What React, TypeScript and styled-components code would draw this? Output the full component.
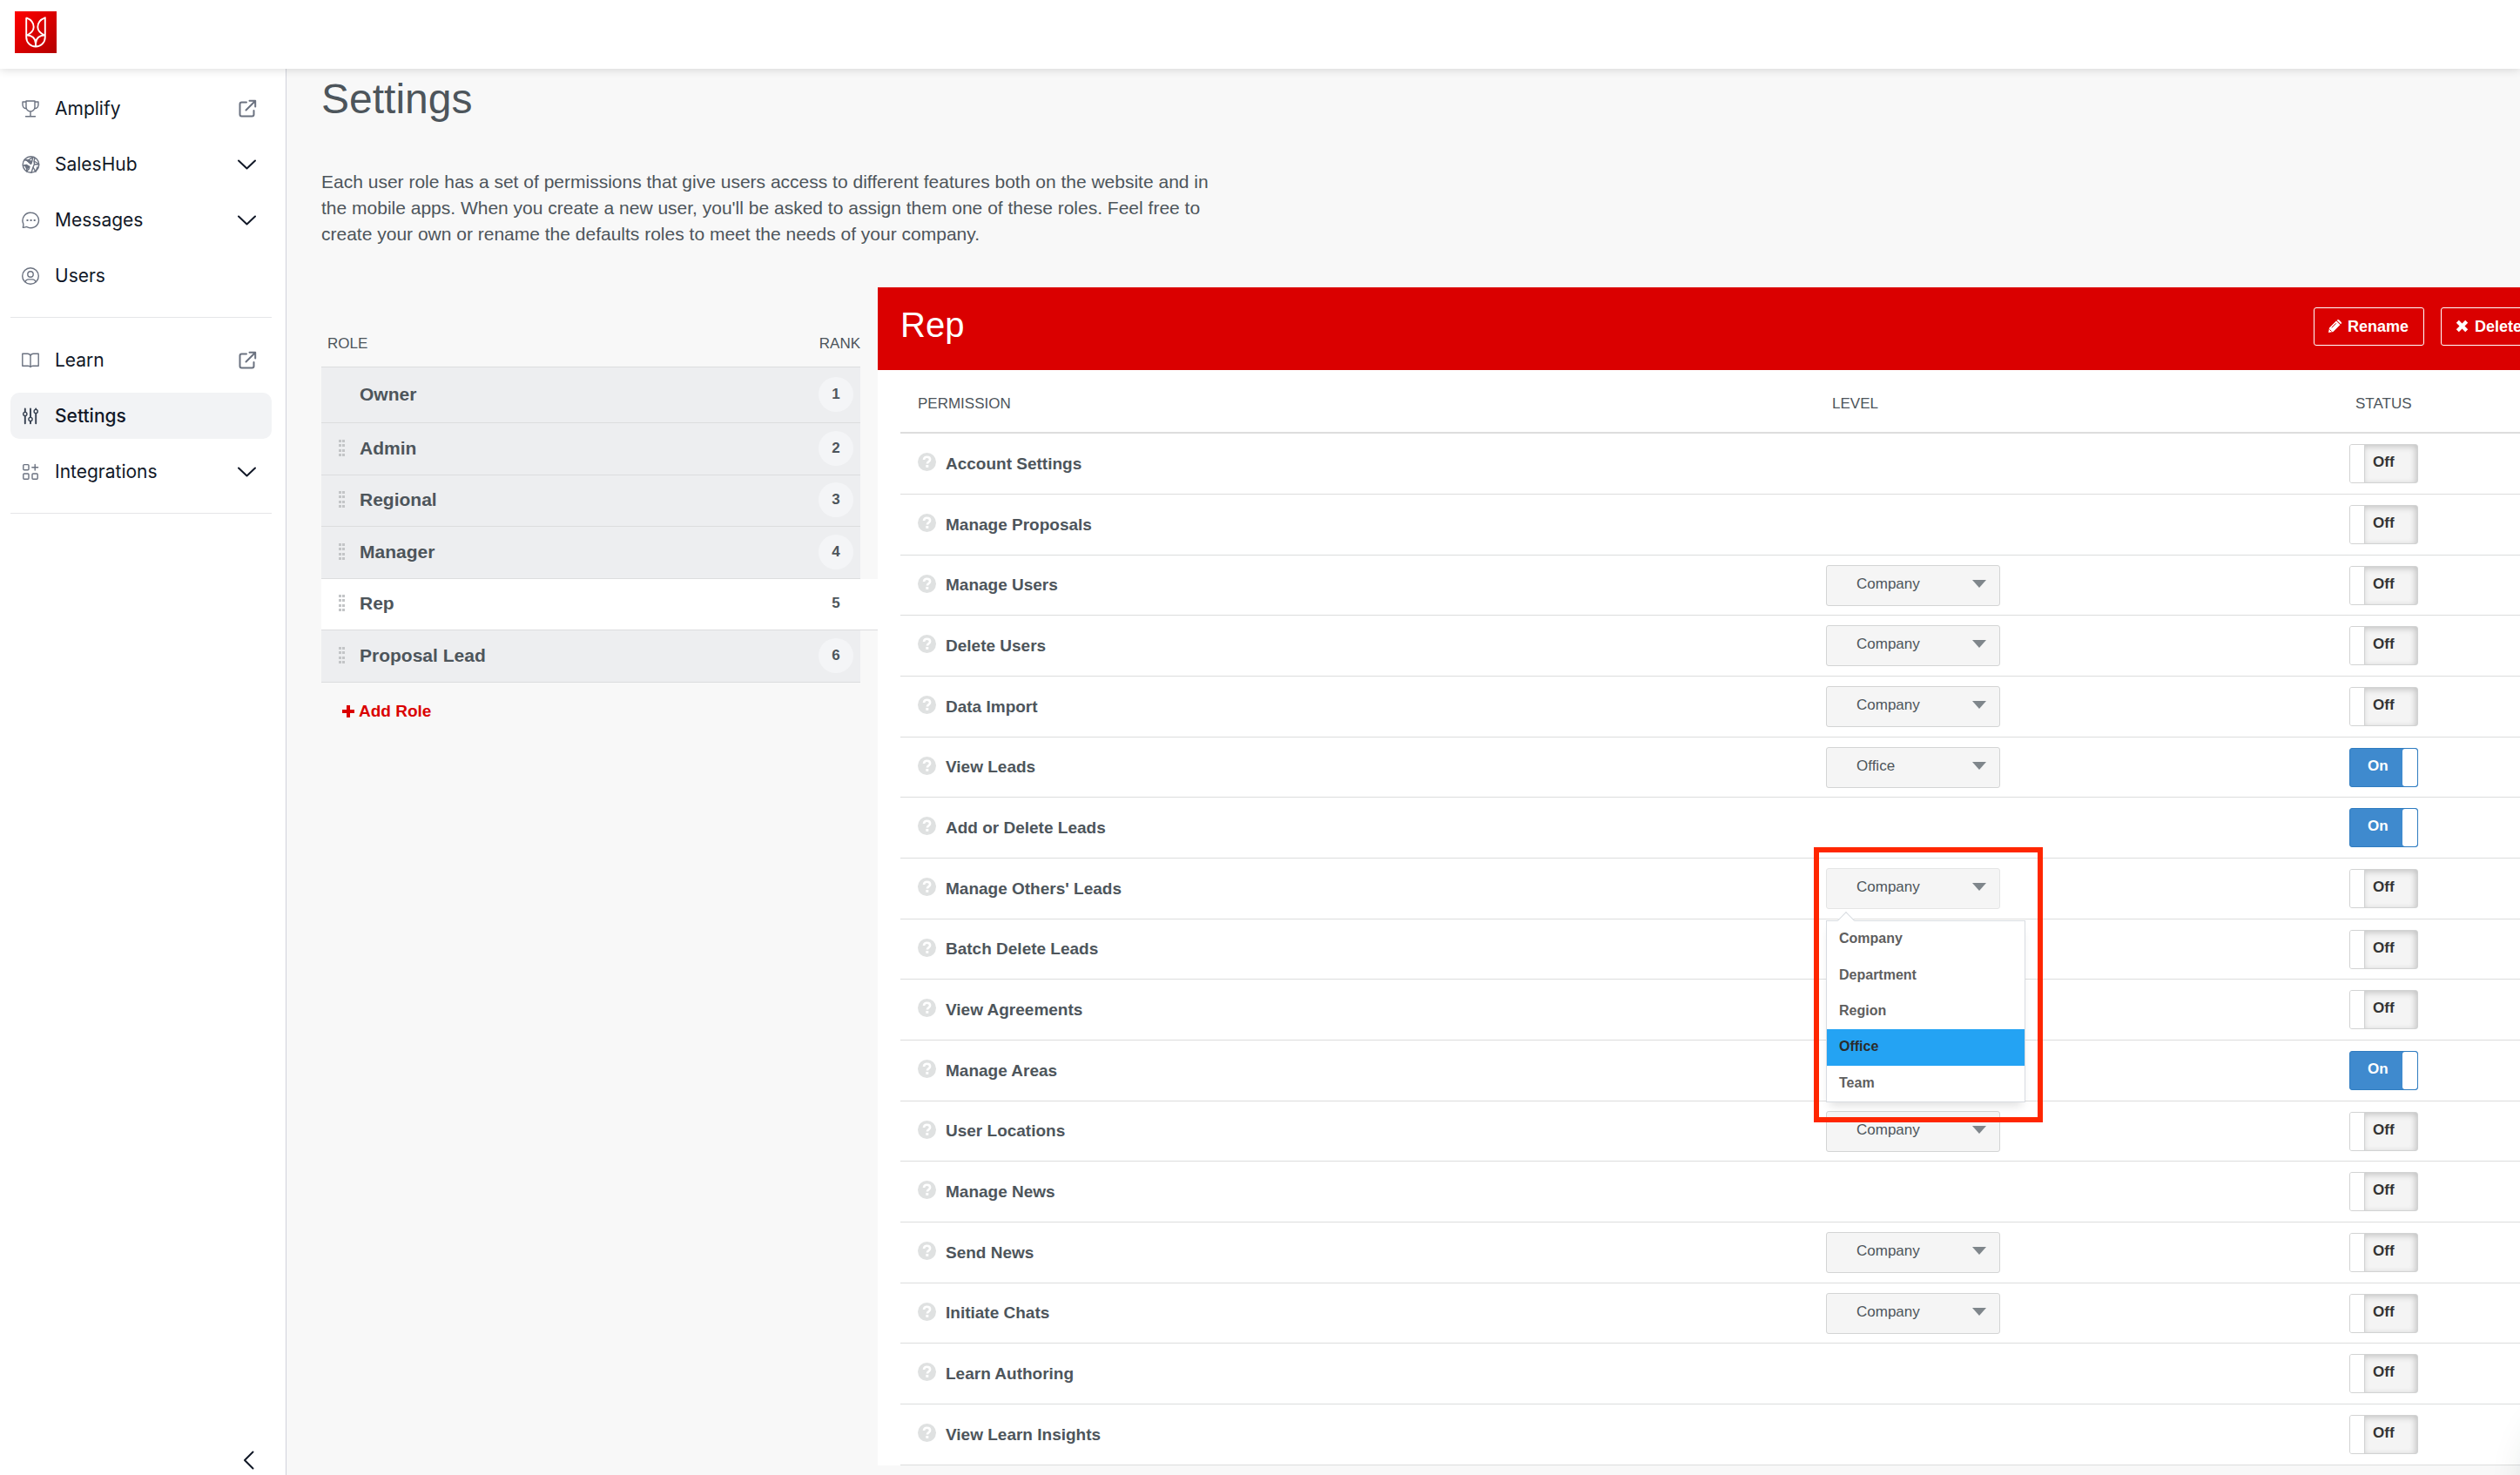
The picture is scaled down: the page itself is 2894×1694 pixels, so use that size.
import React, { useState } from "react";
import styled, { createGlobalStyle, css } from "styled-components";

const sans = `"Liberation Sans", Arial, Helvetica, sans-serif`;
const inter = `Inter, "Liberation Sans", sans-serif`;

const GlobalStyle = createGlobalStyle`
  *, *::before, *::after { box-sizing: border-box; }
  body {
    margin: 0;
    overflow: hidden;
    background: #f8f8f8;
    color: #4d555b;
    font-family: ${sans};
  }
  button, select { font: inherit; color: inherit; }
  h1, h2, p, ul { margin: 0; padding: 0; }
`;

const Page = styled.div`
  display: flex;
  flex-direction: column;
  height: 100vh;
`;

const TopBar = styled.header`
  position: relative;
  z-index: 2;
  flex: none;
  height: 79px;
  padding: 13px 17px;
  background: #fff;
  box-shadow: 0 1px 10px rgba(0, 0, 0, 0.15);
`;

const LogoLink = styled.a`
  display: block;
  width: 48px;
  height: 48px;
  background: linear-gradient(135deg, #ff0000, #b40000);
`;

const Body = styled.div`
  display: flex;
  flex: 1;
  min-height: 0;
`;

const Sidebar = styled.nav`
  display: flex;
  flex: none;
  flex-direction: column;
  width: 329px;
  padding: 19px 16px 0 12px;
  border-right: 1px solid #d1d3dc;
  background: #fff;
`;

const NavGroup = styled.div`
  display: flex;
  flex-direction: column;
  gap: 11px;
  padding-bottom: 21px;
  border-bottom: 1px solid #e5e6e8;
  & + & { padding-top: 22px; }
`;

const NavItem = styled.a<{ $active?: boolean }>`
  display: grid;
  grid-template-columns: 22px 1fr 24px;
  align-items: center;
  column-gap: 17px;
  height: 53px;
  padding: 0 16px 0 12px;
  border-radius: 10px;
  background: ${(p) => (p.$active ? "#f2f3f5" : "transparent")};
  color: #111827;
  font: ${(p) => (p.$active ? 500 : 400)} 21px/30px ${inter};
  text-decoration: none;
  svg { display: block; }
`;

const Glyph = styled.svg<{ $dark?: boolean }>`
  width: 22px;
  height: 22px;
  fill: none;
  stroke: ${(p) => (p.$dark ? "#374151" : "#6b7280")};
  stroke-width: 1.4;
  stroke-linecap: round;
  stroke-linejoin: round;
`;

const TrailGlyph = styled.svg<{ $dark?: boolean }>`
  width: 24px;
  height: 24px;
  fill: none;
  stroke: ${(p) => (p.$dark ? "#111827" : "#6b7280")};
  stroke-width: 2;
  stroke-linecap: round;
  stroke-linejoin: round;
`;

const CollapseButton = styled.button`
  align-self: flex-end;
  margin: auto 15px 5px 0;
  padding: 0;
  border: 0;
  background: none;
  line-height: 0;
`;

const Main = styled.main`
  flex: 1;
  min-width: 0;
  padding: 10px 0 0 40px;
  overflow: hidden;
`;

const Title = styled.h1`
  font-size: 48px;
  font-weight: 400;
  line-height: 50px;
`;

const Intro = styled.p`
  max-width: 1030px;
  margin-top: 55px;
  font-size: 21px;
  line-height: 30px;
`;

const Columns = styled.div`
  display: flex;
  align-items: flex-start;
  margin-top: 46px;
`;

const Roles = styled.section`
  flex: none;
  width: 639px;
  padding-top: 54px;
`;

const RolesHead = styled.div`
  display: flex;
  justify-content: space-between;
  padding: 0 20px 15px 7px;
  font-size: 17px;
  line-height: 22px;
`;

const RoleList = styled.ul`
  list-style: none;
`;

const RoleItem = styled.li<{ $active?: boolean; $fixed?: boolean }>`
  height: ${(p) => (p.$fixed ? 65 : 60)}px;
  margin-right: ${(p) => (p.$active ? 0 : 20)}px;
  padding-right: ${(p) => (p.$active ? 28 : 8)}px;
  border-bottom: 1px solid #dcddde;
  background: ${(p) => (p.$active ? "#fff" : "#edeef0")};
  display: flex;
  align-items: center;
  &:first-child { border-top: 1px solid #dcddde; }
  &:nth-child(2n + 3) { height: 59px; }
`;

const RoleButton = styled.button`
  display: grid;
  grid-template-columns: 8px 1fr 40px;
  align-items: center;
  column-gap: 16px;
  flex: 1;
  padding: 0 0 2px 20px;
  border: 0;
  background: none;
  text-align: left;
  font-size: 21px;
  font-weight: 700;
  line-height: 28px;
`;

const Grip = styled.svg`
  width: 8px;
  height: 20px;
  fill: #c3c5c7;
`;

const Rank = styled.span<{ $active?: boolean }>`
  height: 40px;
  border-radius: 50%;
  background: ${(p) => (p.$active ? "transparent" : "#f4f5f7")};
  text-align: center;
  font-size: 17px;
  line-height: 40px;
`;

const AddRole = styled.button`
  display: flex;
  align-items: center;
  gap: 4px;
  margin: 21px 0 0 23px;
  padding: 0;
  border: 0;
  background: none;
  color: #da0000;
  font-size: 19px;
  font-weight: 700;
  line-height: 24px;
  svg { width: 16px; height: 16px; fill: currentColor; }
`;

const Panel = styled.section`
  flex: 1;
  min-width: 0;
  margin-right: -50px;
  background: #fff;
`;

const PanelHead = styled.header`
  display: flex;
  align-items: flex-start;
  gap: 19px;
  height: 95px;
  padding: 23px 30px 0 26px;
  background: #da0000;
  color: #fff;
`;

const PanelTitle = styled.h2`
  flex: 1;
  font-size: 40px;
  font-weight: 400;
  line-height: 40px;
`;

const OutlineButton = styled.button`
  display: flex;
  align-items: center;
  gap: 6px;
  height: 44px;
  padding: 0 17px 1px 15px;
  border: 1px solid #fff;
  border-radius: 3px;
  background: none;
  font-size: 18px;
  font-weight: 700;
  line-height: 24px;
  svg { width: 17px; height: 17px; fill: currentColor; }
`;

const Table = styled.table`
  width: calc(100% - 26px);
  margin-left: 26px;
  border-collapse: separate;
  border-spacing: 0;
  table-layout: fixed;
`;

const HeadCell = styled.th<{ $width?: number }>`
  width: ${(p) => (p.$width ? `${p.$width}px` : "auto")};
  height: 73px;
  padding: 6px 0 0 7px;
  border-bottom: 2px solid #ddd;
  text-align: left;
  font-size: 17px;
  font-weight: 400;
  line-height: 22px;
  &:first-child { padding-left: 20px; }
`;

const Row = styled.tr`
  height: 70px;
  &:nth-child(3n) { height: 69px; }
`;

const Cell = styled.td`
  padding: 0;
  border-bottom: 1px solid #dcdddd;
  vertical-align: middle;
`;

const Permission = styled.div`
  display: flex;
  align-items: center;
  gap: 11px;
  padding-left: 20px;
  font-size: 19px;
  font-weight: 700;
  line-height: 26px;
`;

const HelpIcon = styled.svg`
  width: 21px;
  height: 21px;
  margin-bottom: 4px;
`;

const SelectWrap = styled.div`
  position: relative;
  width: 200px;
  height: 47px;
  &::after {
    content: "";
    position: absolute;
    top: 17px;
    right: 16px;
    border: 8px solid transparent;
    border-top: 9px solid #7f868b;
    border-bottom: 0;
    pointer-events: none;
  }
`;

const Select = styled.select<{ $open?: boolean }>`
  appearance: none;
  display: block;
  width: 100%;
  height: 47px;
  padding: 0 34px 4px;
  border: 1px solid ${(p) => (p.$open ? "#e4e5e5" : "#d3d4d4")};
  border-radius: 3px;
  background: #f5f5f5;
  font-size: 17px;
`;

const Menu = styled.ul`
  position: absolute;
  z-index: 1;
  top: 60px;
  left: 0;
  display: flex;
  flex-direction: column;
  width: 229px;
  height: 209px;
  border: 1px solid #d8dce1;
  background: #fff;
  box-shadow: 0 8px 10px -4px rgba(0, 0, 0, 0.12);
  list-style: none;
  &::before {
    content: "";
    position: absolute;
    top: -8px;
    left: 15px;
    width: 14px;
    height: 14px;
    border: solid #d8dce1;
    border-width: 1px 0 0 1px;
    background: #fff;
    transform: rotate(45deg);
  }
`;

const Option = styled.li<{ $hover?: boolean }>`
  position: relative;
  display: flex;
  flex: 1;
  align-items: center;
  padding: 0 14px 1px;
  font-size: 16px;
  font-weight: 700;
  line-height: 20px;
  color: #5e5e5e;
  ${(p) => p.$hover && css`background: #24a3f3; color: #2b2b2b;`}
`;

const Highlight = styled.div`
  position: absolute;
  z-index: 2;
  top: -24px;
  left: -14px;
  width: 263px;
  height: 316px;
  border: 6px solid #ff2600;
  pointer-events: none;
`;

const Toggle = styled.label<{ $on: boolean }>`
  display: flex;
  flex-direction: ${(p) => (p.$on ? "row" : "row-reverse")};
  width: 79px;
  height: 45px;
  border: 1px solid ${(p) => (p.$on ? "#2f7cc0" : "#d2d3d3")};
  border-radius: 3px;
  background: ${(p) => (p.$on ? "#3f8ace" : "#f4f4f4")};
  color: ${(p) => (p.$on ? "#fff" : "#333")};
  font-size: 17px;
  font-weight: 700;
  line-height: 39px;
  overflow: hidden;
  input { position: absolute; opacity: 0; }
`;

const ToggleText = styled.span<{ $on: boolean }>`
  flex: 1;
  padding-left: ${(p) => (p.$on ? 20 : 9)}px;
  box-shadow: ${(p) => (p.$on ? "none" : "inset -2px 2px 7px rgba(0, 0, 0, 0.2)")};
`;

const ToggleKnob = styled.span<{ $on: boolean }>`
  width: 17px;
  border: solid #d2d3d3;
  border-width: ${(p) => (p.$on ? "0" : "0 1px 0 0")};
  border-radius: ${(p) => (p.$on ? "3px" : "0")};
  background: #fff;
`;

const ChatLauncher = styled.div`
  position: fixed;
  right: -136px;
  bottom: -90px;
  width: 120px;
  height: 160px;
  border-radius: 50%;
  box-shadow: 0 0 50px rgba(0, 50, 35, 0.2);
`;

const icons: Record<string, React.ReactNode> = {
  trophy: (
    <path d="M6 2h10v7a5 5 0 0 1-10 0zM6 3H2v3c0 2.800 1.500 4.500 4.300 4.800M16 3h4v3c0 2.800-1.500 4.500-4.300 4.800M11 14.200v5.300M5.500 19.700h11" />
  ),
  globe: (
    <>
      <circle cx="11.500" cy="11" r="9.300" />
      <path d="M4 5.500l3.500 1.200 6-4M7.500 6.700l5 1 1.500-5.200M12.500 7.700l-1 2.600-4-3.600M16 3.500l-1 3.700 4.500 2.300M2.400 12.500l4-1.200 3.500 2.200-3 2-.5 3.500M9.900 13.500l-.7 2.500-2.800 3M20.500 11l-5-.5-1.500 3.500 3 5.300M14 14l-2 6.300M15.500 10.500L15 7.200M17 19.300l2-5.500" />
      <path d="M6 5.500l6.500 2-1 2.800zM4.500 11.500l5 2-3 2z" fill="#6b7280" />
    </>
  ),
  message: (
    <>
      <path d="M11.500 2.300a9 8.700 0 1 1-4 16.500c-.6-.3-1-.3-1.500-.2l-3 .8c-.5.100-.8-.2-.6-.7.700-1.500.6-2.500.3-3.900A9 9 0 0 1 11.500 2.300z" />
      <path d="M7.200 11h.6M11.300 11h.6M15.400 11h.6" strokeWidth="1.800" />
    </>
  ),
  user: (
    <>
      <circle cx="11" cy="11" r="9.300" />
      <circle cx="11" cy="9" r="3.200" />
      <path d="M4.800 17.600c1-2 2.500-2.700 4-2.700h4.400c1.500 0 3 .7 4 2.700" />
    </>
  ),
  book: (
    <path d="M11 5.500c-.5-1.500-1.700-2.200-3.300-2.200H1.800v14h6.500c1.300 0 2.200.4 2.700 1.200.5-.8 1.400-1.200 2.700-1.200h6.500v-14h-5.900c-1.600 0-2.800.7-3.300 2.200zv13" />
  ),
  sliders: (
    <>
      <circle cx="4.800" cy="8.500" r="2.100" />
      <circle cx="11" cy="14.500" r="2.100" />
      <circle cx="17.200" cy="5.500" r="2.100" />
      <path d="M4.800 2.500v3.800M4.800 10.800v8.400M11 2.500v9.800M11 16.800v2.400M17.200 2.500v.8M17.200 7.800v11.400" strokeWidth="1.900" />
    </>
  ),
  apps: (
    <>
      <rect x="2.800" y="2.600" width="6.200" height="6.200" rx="1" />
      <rect x="2.800" y="13" width="6.200" height="6.200" rx="1" />
      <rect x="13" y="13" width="6.200" height="6.200" rx="1" />
      <path d="M16.200 2.400v6.600M12.800 5.700h6.800" />
    </>
  ),
};

const trails: Record<string, React.ReactNode> = {
  external: (
    <TrailGlyph viewBox="0 0 24 24" aria-hidden="true">
      <path d="M11 4.500H5.500a2 2 0 0 0-2 2v12a2 2 0 0 0 2 2h12a2 2 0 0 0 2-2V14M14.500 2.800h6.700v6.700M20.800 3.200L10.500 13.500" />
    </TrailGlyph>
  ),
  chevron: (
    <TrailGlyph $dark viewBox="0 0 24 24" aria-hidden="true">
      <path d="M2 7.500l9.500 9 9.500-9" />
    </TrailGlyph>
  ),
};

type Nav = { label: string; icon: string; trail?: string; active?: boolean };

const navGroups: Nav[][] = [
  [
    { label: "Amplify", icon: "trophy", trail: "external" },
    { label: "SalesHub", icon: "globe", trail: "chevron" },
    { label: "Messages", icon: "message", trail: "chevron" },
    { label: "Users", icon: "user" },
  ],
  [
    { label: "Learn", icon: "book", trail: "external" },
    { label: "Settings", icon: "sliders", active: true },
    { label: "Integrations", icon: "apps", trail: "chevron" },
  ],
];

const roles = ["Owner", "Admin", "Regional", "Manager", "Rep", "Proposal Lead"];
const levels = ["Company", "Department", "Region", "Office", "Team"];

type Perm = { name: string; level?: string; on?: boolean; open?: boolean };

const permissions: Perm[] = [
  { name: "Account Settings" },
  { name: "Manage Proposals" },
  { name: "Manage Users", level: "Company" },
  { name: "Delete Users", level: "Company" },
  { name: "Data Import", level: "Company" },
  { name: "View Leads", level: "Office", on: true },
  { name: "Add or Delete Leads", on: true },
  { name: "Manage Others' Leads", level: "Company", open: true },
  { name: "Batch Delete Leads" },
  { name: "View Agreements" },
  { name: "Manage Areas", on: true },
  { name: "User Locations", level: "Company" },
  { name: "Manage News" },
  { name: "Send News", level: "Company" },
  { name: "Initiate Chats", level: "Company" },
  { name: "Learn Authoring" },
  { name: "View Learn Insights" },
];

function PermissionRow({ perm }: { perm: Perm }) {
  const [on, setOn] = useState(!!perm.on);
  return (
    <Row>
      <Cell>
        <Permission>
          <HelpIcon viewBox="0 0 21 21" aria-hidden="true">
            <circle cx="10.500" cy="10.500" r="10.500" fill="#dfe1e1" />
            <path d="M7 8c0-2.200 1.500-3.200 3.500-3.200s3.600 1 3.600 3c0 2.400-3.200 2.500-3.200 4.700" fill="none" stroke="#fff" strokeWidth="2.600" />
            <rect x="9.300" y="14" width="3" height="2.800" fill="#fff" />
          </HelpIcon>
          {perm.name}
        </Permission>
      </Cell>
      <Cell>
        {perm.level && (
          <SelectWrap>
            <Select defaultValue={perm.level} $open={perm.open} aria-label={`${perm.name} level`}>
              {levels.map((l) => (
                <option key={l}>{l}</option>
              ))}
            </Select>
            {perm.open && (
              <>
                <Menu role="listbox">
                  {levels.map((l) => (
                    <Option key={l} role="option" aria-selected={l === perm.level} $hover={l === "Office"}>
                      {l}
                    </Option>
                  ))}
                </Menu>
                <Highlight />
              </>
            )}
          </SelectWrap>
        )}
      </Cell>
      <Cell>
        <Toggle $on={on}>
          <input type="checkbox" checked={on} onChange={() => setOn(!on)} aria-label={perm.name} />
          <ToggleText $on={on}>{on ? "On" : "Off"}</ToggleText>
          <ToggleKnob $on={on} />
        </Toggle>
      </Cell>
    </Row>
  );
}

export default function App() {
  return (
    <Page>
      <GlobalStyle />
      <TopBar>
        <LogoLink href="#" aria-label="Home">
          <svg viewBox="0 0 48 48" fill="none" stroke="#fff" strokeWidth="1.900" strokeLinejoin="round">
            <path d="M13.200 7.300v22.200C13.200 36 18 40.500 24 40.500S34.800 36 34.800 29.500V7.300C29 9.500 26.300 13.500 26.300 18c0 4 3.500 7.500 8.500 10M13.200 7.300C19 9.500 21.700 13.500 21.700 18c0 4-3.500 7.500-8.500 10M13.500 27.500c5.500-.5 10.500 3.500 10.500 9.500v3.500M34.500 27.500c-5.500-.5-10.500 3.500-10.500 9.500" />
          </svg>
        </LogoLink>
      </TopBar>
      <Body>
        <Sidebar>
          {navGroups.map((group, i) => (
            <NavGroup key={i}>
              {group.map((n) => (
                <NavItem key={n.label} href="#" $active={n.active}>
                  <Glyph viewBox="0 0 22 22" $dark={n.active} aria-hidden="true">{icons[n.icon]}</Glyph>
                  {n.label}
                  {n.trail && trails[n.trail]}
                </NavItem>
              ))}
            </NavGroup>
          ))}
          <CollapseButton aria-label="Collapse sidebar">
            <TrailGlyph $dark viewBox="0 0 24 24">
              <path d="M17.500 2.500L8 12l9.500 9.500" />
            </TrailGlyph>
          </CollapseButton>
        </Sidebar>
        <Main>
          <Title>Settings</Title>
          <Intro>
            Each user role has a set of permissions that give users access to different features both on the website
            and in the mobile apps. When you create a new user, you'll be asked to assign them one of these roles. Feel
            free to create your own or rename the defaults roles to meet the needs of your company.
          </Intro>
          <Columns>
            <Roles>
              <RolesHead>
                <span>ROLE</span>
                <span>RANK</span>
              </RolesHead>
              <RoleList>
                {roles.map((r, i) => (
                  <RoleItem key={r} $active={r === "Rep"} $fixed={i === 0}>
                    <RoleButton>
                      {i === 0 ? (
                        <span />
                      ) : (
                        <Grip viewBox="0 0 8 20" aria-hidden="true">
                          {[0, 5, 11, 16].map((y) => (
                            <path key={y} d={`M0 ${y}h3v3H0zM4 ${y}h3v3H4z`} />
                          ))}
                        </Grip>
                      )}
                      {r}
                      <Rank $active={r === "Rep"}>{i + 1}</Rank>
                    </RoleButton>
                  </RoleItem>
                ))}
              </RoleList>
              <AddRole>
                <svg viewBox="0 0 16 16" aria-hidden="true">
                  <path d="M6 1h4v5h5v4h-5v5H6v-5H1V6h5z" />
                </svg>
                Add Role
              </AddRole>
            </Roles>
            <Panel>
              <PanelHead>
                <PanelTitle>Rep</PanelTitle>
                <OutlineButton>
                  <svg viewBox="0 0 17 17" aria-hidden="true">
                    <path d="M1 16l1-5.500L10 2.500l4.500 4.500-8 8zM11 1.600c.8-.8 1.600-.8 2.300-.1l2.200 2.200c.7.700.7 1.500 0 2.300l-.3.300-4.500-4.400z" />
                    <path d="M2.500 12.500l2 2M4.800 10.300l5-5" stroke="#da0000" strokeWidth="1" />
                  </svg>
                  Rename
                </OutlineButton>
                <OutlineButton>
                  <svg viewBox="0 0 17 17" aria-hidden="true">
                    <path d="M4.800 1.800l3.700 3.700 3.700-3.700 3 3-3.700 3.700 3.700 3.700-3 3-3.700-3.700-3.700 3.700-3-3 3.700-3.700-3.700-3.700z" />
                  </svg>
                  Delete
                </OutlineButton>
              </PanelHead>
              <Table>
                <thead>
                  <tr>
                    <HeadCell scope="col">PERMISSION</HeadCell>
                    <HeadCell scope="col" $width={601}>LEVEL</HeadCell>
                    <HeadCell scope="col" $width={246}>STATUS</HeadCell>
                  </tr>
                </thead>
                <tbody>
                  {permissions.map((p) => (
                    <PermissionRow key={p.name} perm={p} />
                  ))}
                </tbody>
              </Table>
            </Panel>
          </Columns>
        </Main>
      </Body>
      <ChatLauncher />
    </Page>
  );
}
